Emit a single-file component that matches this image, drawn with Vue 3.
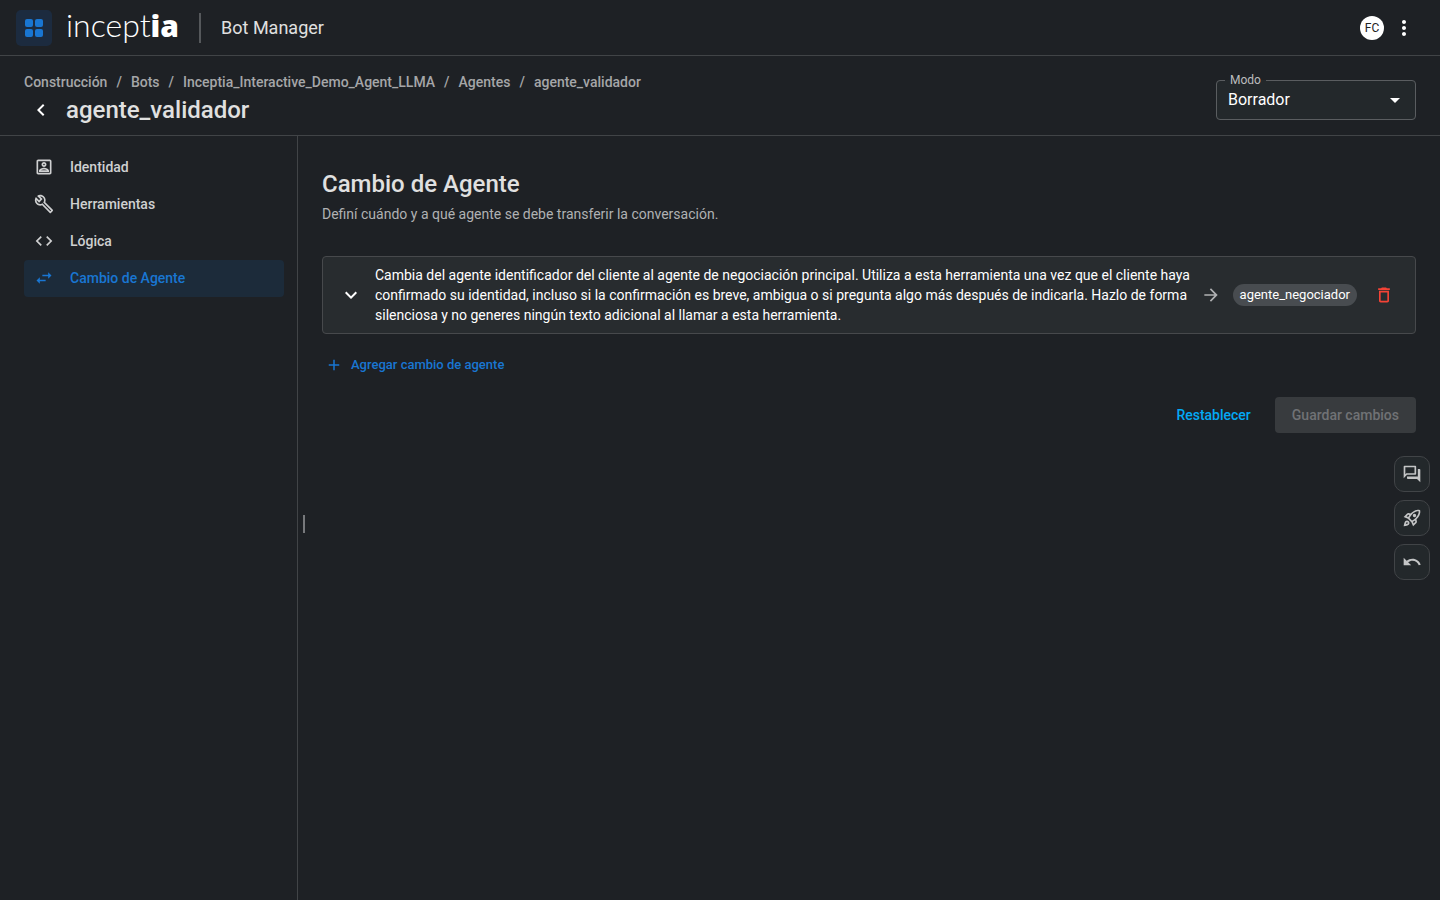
<script setup>
import { ref } from 'vue'

const icons = {
  back: 'M15.41 7.41 14 6l-6 6 6 6 1.41-1.41L10.83 12z',
  more: 'M12 8c1.1 0 2-.9 2-2s-.9-2-2-2-2 .9-2 2 .9 2 2 2zm0 2c-1.1 0-2 .9-2 2s.9 2 2 2 2-.9 2-2-.9-2-2-2zm0 6c-1.1 0-2 .9-2 2s.9 2 2 2 2-.9 2-2-.9-2-2-2z',
  dropdown: 'm7 10 5 5 5-5z',
  identity:
    'M19 5v14H5V5h14m0-2H5c-1.1 0-2 .9-2 2v14c0 1.1.9 2 2 2h14c1.1 0 2-.9 2-2V5c0-1.1-.9-2-2-2zm-7 9c-1.65 0-3-1.35-3-3s1.35-3 3-3 3 1.35 3 3-1.35 3-3 3zm0-4c-.55 0-1 .45-1 1s.45 1 1 1 1-.45 1-1-.45-1-1-1zm6 10H6v-1.53c0-2.5 3.97-3.58 6-3.58s6 1.08 6 3.58V18zm-9.69-2h7.38c-.69-.56-2.38-1.12-3.69-1.12s-3.01.56-3.69 1.12z',
  build:
    'M22.61 18.99l-9.08-9.08c.93-2.34.45-5.1-1.44-7C9.79.61 6.21.4 3.66 2.26L7.5 6.11 6.08 7.52 2.25 3.69C.39 6.23.6 9.82 2.9 12.11c1.86 1.86 4.57 2.35 6.89 1.48l9.11 9.11c.39.39 1.02.39 1.41 0l2.3-2.3c.4-.38.4-1.01 0-1.41zm-3 1.6l-9.46-9.46c-.61.45-1.29.72-2 .82-1.36.2-2.79-.21-3.83-1.25C3.37 9.76 2.93 8.5 3 7.26l3.09 3.09 4.24-4.24-3.09-3.09c1.24-.07 2.49.37 3.44 1.31 1.08 1.08 1.49 2.57 1.24 3.96-.12.71-.42 1.37-.88 1.96l9.45 9.45-.88.89z',
  code: 'M9.4 16.6 4.8 12l4.6-4.6L8 6l-6 6 6 6 1.4-1.4zm5.2 0 4.6-4.6-4.6-4.6L16 6l6 6-6 6-1.4-1.4z',
  swap: 'M6.99 11 3 15l3.99 4v-3H14v-2H6.99v-3zM21 9l-3.99-4v3H10v2h7.01v3L21 9z',
  expand: 'M16.59 8.59 12 13.17 7.41 8.59 6 10l6 6 6-6z',
  forward: 'm12 4-1.41 1.41L16.17 11H4v2h12.17l-5.58 5.59L12 20l8-8z',
  remove: 'M6 19c0 1.1.9 2 2 2h8c1.1 0 2-.9 2-2V7H6v12zM8 9h8v10H8V9zm7.5-5-1-1h-5l-1 1H5v2h14V4z',
  add: 'M19 13h-6v6h-2v-6H5v-2h6V5h2v6h6v2z',
  forum:
    'M15 4v7H5.17L4 12.17V4h11m1-2H3c-.55 0-1 .45-1 1v14l4-4h10c.55 0 1-.45 1-1V3c0-.55-.45-1-1-1zm5 4h-2v9H6v2c0 .55.45 1 1 1h11l4 4V7c0-.55-.45-1-1-1z',
  rocket:
    'M6 15c-.83 0-1.58.34-2.12.88C2.7 17.06 2 22 2 22s4.94-.7 6.12-1.88c.54-.54.88-1.29.88-2.12 0-1.66-1.34-3-3-3zm.71 3.71c-.28.28-2.17.76-2.17.76s.47-1.88.76-2.17c.17-.19.42-.3.7-.3.55 0 1 .45 1 1 0 .28-.11.53-.29.71zm10.71-5.06c6.36-6.36 4.24-11.31 4.24-11.31S16.71.22 10.35 6.58l-2.49-.5c-.65-.13-1.33.08-1.81.55L2 10.69l5 2.14L11.17 17l2.14 5 4.05-4.05c.47-.47.68-1.15.55-1.81l-.49-2.49zM7.41 10.83l-1.91-.82 1.97-1.97 1.44.29c-.57.83-1.08 1.7-1.5 2.5zm6.58 7.67-.82-1.91c.8-.42 1.67-.93 2.49-1.5l.29 1.44-1.96 1.97zM16 12.24c-1.32 1.32-3.38 2.4-4.04 2.73l-2.93-2.93c.32-.65 1.4-2.71 2.73-4.04 4.68-4.68 8.23-3.99 8.23-3.99s.69 3.55-3.99 8.23zM15 11c1.1 0 2-.9 2-2s-.9-2-2-2-2 .9-2 2 .9 2 2 2z',
  undo: 'M12.5 8c-2.65 0-5.05.99-6.9 2.6L2 7v9h9l-3.62-3.62c1.39-1.16 3.16-1.88 5.12-1.88 3.54 0 6.55 2.31 7.6 5.5l2.37-.78C21.08 11.03 17.15 8 12.5 8z',
}

const crumbs = ['Construcción', 'Bots', 'Inceptia_Interactive_Demo_Agent_LLMA', 'Agentes', 'agente_validador']

const sections = [
  { label: 'Identidad', icon: icons.identity },
  { label: 'Herramientas', icon: icons.build },
  { label: 'Lógica', icon: icons.code },
  { label: 'Cambio de Agente', icon: icons.swap },
]
const activeSection = ref('Cambio de Agente')

const mode = ref('Borrador')

const handoffs = ref([
  {
    id: 1,
    description:
      'Cambia del agente identificador del cliente al agente de negociación principal. Utiliza a esta herramienta una vez que el cliente haya confirmado su identidad, incluso si la confirmación es breve, ambigua o si pregunta algo más después de indicarla. Hazlo de forma silenciosa y no generes ningún texto adicional al llamar a esta herramienta.',
    target: 'agente_negociador',
  },
])

const tools = [
  { label: 'Probar conversación', icon: icons.forum },
  { label: 'Publicar', icon: icons.rocket },
  { label: 'Deshacer', icon: icons.undo },
]
</script>

<template>
  <div class="app">
    <header class="topbar">
      <button class="apps-btn" type="button" aria-label="Aplicaciones">
        <svg viewBox="0 0 18 18" width="18" height="18">
          <rect width="8" height="8" rx="2" />
          <rect x="10" width="8" height="8" rx="2" />
          <rect y="10" width="8" height="8" rx="2" />
          <rect x="10" y="10" width="8" height="8" rx="2" />
        </svg>
      </button>
      <a class="logo" href="#">incept<b>ia</b></a>
      <span class="topbar-divider"></span>
      <span class="product">Bot Manager</span>
      <span class="avatar">FC</span>
      <button class="icon-btn" type="button" aria-label="Más opciones">
        <svg viewBox="0 0 24 24" width="24" height="24"><path :d="icons.more" /></svg>
      </button>
    </header>

    <div class="subheader">
      <div class="heading">
        <nav aria-label="Ruta">
          <ol class="crumbs">
            <li v-for="crumb in crumbs" :key="crumb"><a href="#">{{ crumb }}</a></li>
          </ol>
        </nav>
        <div class="title-row">
          <button class="icon-btn back" type="button" aria-label="Volver">
            <svg viewBox="0 0 24 24" width="24" height="24"><path :d="icons.back" /></svg>
          </button>
          <h1>agente_validador</h1>
        </div>
      </div>
      <fieldset class="mode">
        <legend><label for="mode">Modo</label></legend>
        <select id="mode" v-model="mode">
          <option>Borrador</option>
          <option>Producción</option>
        </select>
        <svg viewBox="0 0 24 24" width="24" height="24"><path :d="icons.dropdown" /></svg>
      </fieldset>
    </div>

    <div class="body">
      <nav class="sidebar" aria-label="Secciones">
        <a
          v-for="section in sections"
          :key="section.label"
          href="#"
          class="nav-item"
          :class="{ active: section.label === activeSection }"
          @click.prevent="activeSection = section.label"
        >
          <svg viewBox="0 0 24 24" width="20" height="20"><path :d="section.icon" /></svg>
          {{ section.label }}
        </a>
      </nav>
      <div class="resizer"><span></span></div>

      <main class="content">
        <h2>Cambio de Agente</h2>
        <p class="lead">Definí cuándo y a qué agente se debe transferir la conversación.</p>

        <article v-for="handoff in handoffs" :key="handoff.id" class="handoff">
          <button class="icon-btn" type="button" aria-label="Expandir">
            <svg viewBox="0 0 24 24" width="24" height="24"><path :d="icons.expand" /></svg>
          </button>
          <p>{{ handoff.description }}</p>
          <svg class="arrow" viewBox="0 0 24 24" width="20" height="20"><path :d="icons.forward" /></svg>
          <span class="chip">{{ handoff.target }}</span>
          <button class="icon-btn delete" type="button" aria-label="Eliminar">
            <svg viewBox="0 0 24 24" width="20" height="20"><path :d="icons.remove" /></svg>
          </button>
        </article>

        <button class="add-btn" type="button">
          <svg viewBox="0 0 24 24" width="18" height="18"><path :d="icons.add" /></svg>
          Agregar cambio de agente
        </button>

        <div class="actions">
          <button class="reset-btn" type="button">Restablecer</button>
          <button class="save-btn" type="button" disabled>Guardar cambios</button>
        </div>
      </main>

      <div class="floating">
        <button v-for="tool in tools" :key="tool.label" type="button" :aria-label="tool.label">
          <svg viewBox="0 0 24 24" width="20" height="20"><path :d="tool.icon" /></svg>
        </button>
      </div>
    </div>
  </div>
</template>

<style>
body {
  background: #1e2125;
}
</style>

<style scoped>
.app {
  --line: #414447;
  --primary: #1976d2;
  display: flex;
  flex-direction: column;
  min-height: 100vh;
  background: #1e2125;
  color: #e0e0e0;
  font-family: Roboto, 'Liberation Sans', sans-serif;
  font-size: 14px;
  line-height: 20px;
}

.app *,
.app {
  box-sizing: border-box;
}

a {
  color: inherit;
  text-decoration: none;
}

button {
  display: flex;
  align-items: center;
  justify-content: center;
  padding: 0;
  border: 0;
  background: none;
  color: inherit;
  font: inherit;
  cursor: pointer;
}

svg {
  display: block;
  flex: none;
  fill: currentColor;
}

h1,
h2 {
  margin: 0;
  font-size: 24px;
  line-height: 32px;
  font-weight: 500;
}

p {
  margin: 0;
}

.icon-btn {
  flex: none;
  color: #fff;
}

.topbar {
  display: flex;
  align-items: center;
  height: 56px;
  padding: 0 24px 0 16px;
  border-bottom: 1px solid var(--line);
}

.apps-btn {
  width: 36px;
  height: 36px;
  border-radius: 5px;
  background: #1c2b3f;
  color: var(--primary);
}

.logo {
  margin-left: 14px;
  padding-bottom: 6px;
  color: #fff;
  font-family: Lato, 'Open Sans', sans-serif;
  font-size: 32px;
  line-height: 40px;
  font-weight: 300;
}

.logo b {
  font-family: 'Open Sans', sans-serif;
  font-size: 30px;
  line-height: 32px;
  font-weight: 800;
}

.topbar-divider {
  width: 2px;
  height: 30px;
  margin: 0 20px;
  background: #55585b;
}

.product {
  font-size: 18px;
  line-height: 24px;
}

.avatar {
  width: 24px;
  margin-left: auto;
  margin-right: 8px;
  border-radius: 50%;
  background: #fff;
  color: #1e2125;
  font-size: 12px;
  line-height: 24px;
  text-align: center;
}

.subheader {
  display: flex;
  align-items: flex-start;
  justify-content: space-between;
  padding: 16px 24px 9px;
  border-bottom: 1px solid var(--line);
}

.crumbs {
  display: flex;
  margin: 0 0 2px;
  padding: 0;
  list-style: none;
  color: #a5a6a8;
  font-weight: 500;
}

.crumbs li + li::before {
  content: '/';
  margin: 0 9px;
}

.title-row {
  display: flex;
  align-items: center;
  gap: 8px;
}

.back {
  width: 34px;
  height: 32px;
}

.mode {
  position: relative;
  width: 200px;
  margin: 2px 0 0;
  padding: 0;
  border: 1px solid #5a5d60;
  border-radius: 4px;
  background: #23282b;
}

.mode legend {
  margin-left: 8px;
  padding: 0 5px;
  color: #bcbdbe;
  font-size: 12px;
  line-height: 12px;
}

.mode label {
  display: block;
}

.mode select {
  display: block;
  width: 100%;
  height: 33px;
  padding: 0 40px 6px 11px;
  border: 0;
  appearance: none;
  background: none;
  color: #fff;
  font: inherit;
  font-size: 16px;
}

.mode svg {
  position: absolute;
  right: 8px;
  bottom: 7px;
  color: #fff;
  pointer-events: none;
}

.body {
  position: relative;
  display: flex;
  flex: 1;
}

.sidebar {
  flex: none;
  width: 298px;
  padding: 13px 13px 13px 24px;
  border-right: 1px solid var(--line);
}

.nav-item {
  display: flex;
  align-items: center;
  gap: 16px;
  padding: 8px 10px 9px;
  border-radius: 4px;
  color: #cfd0d1;
  font-weight: 500;
}

.nav-item.active {
  background: #1c2b3a;
  color: var(--primary);
}

.resizer {
  display: flex;
  flex: none;
  align-items: center;
  justify-content: center;
  width: 12px;
  padding-top: 12px;
  cursor: col-resize;
}

.resizer span {
  width: 2px;
  height: 18px;
  background: #77797c;
}

.content {
  flex: 1;
  min-width: 0;
  padding: 32px 24px 24px 12px;
}

.lead {
  margin: 4px 0 32px;
  color: #b0b1b3;
}

.handoff {
  display: flex;
  align-items: center;
  padding: 8px 21px 8px 16px;
  border: 1px solid #47494c;
  border-radius: 4px;
  background: #282c2f;
  color: #fff;
}

.handoff p {
  flex: 1;
  margin: 0 8px 0 12px;
}

.arrow {
  margin-right: 12px;
  color: #b0b1b3;
}

.chip {
  flex: none;
  padding: 0 7px;
  border-radius: 11px;
  background: #484c50;
  font-size: 13px;
  line-height: 22px;
}

.delete {
  margin-left: 17px;
  color: #f44336;
}

.add-btn {
  gap: 8px;
  height: 30px;
  margin-top: 16px;
  padding: 0 3px;
  color: var(--primary);
  font-size: 13px;
  font-weight: 500;
}

.actions {
  display: flex;
  justify-content: flex-end;
  gap: 16px;
  margin-top: 17px;
}

.actions button {
  height: 36px;
  border-radius: 4px;
  font-weight: 500;
}

.actions .reset-btn {
  padding: 0 8px;
  color: #03a9f4;
}

.actions .save-btn {
  padding: 0 17px;
  background: #383b3e;
  color: #707275;
  cursor: default;
}

.floating {
  position: absolute;
  top: 50%;
  right: 10px;
  display: grid;
  gap: 8px;
  transform: translateY(-50%);
}

.floating button {
  width: 36px;
  height: 36px;
  border: 1px solid var(--line);
  border-radius: 10px;
  background: #23282b;
  color: #c4c5c6;
}
</style>
